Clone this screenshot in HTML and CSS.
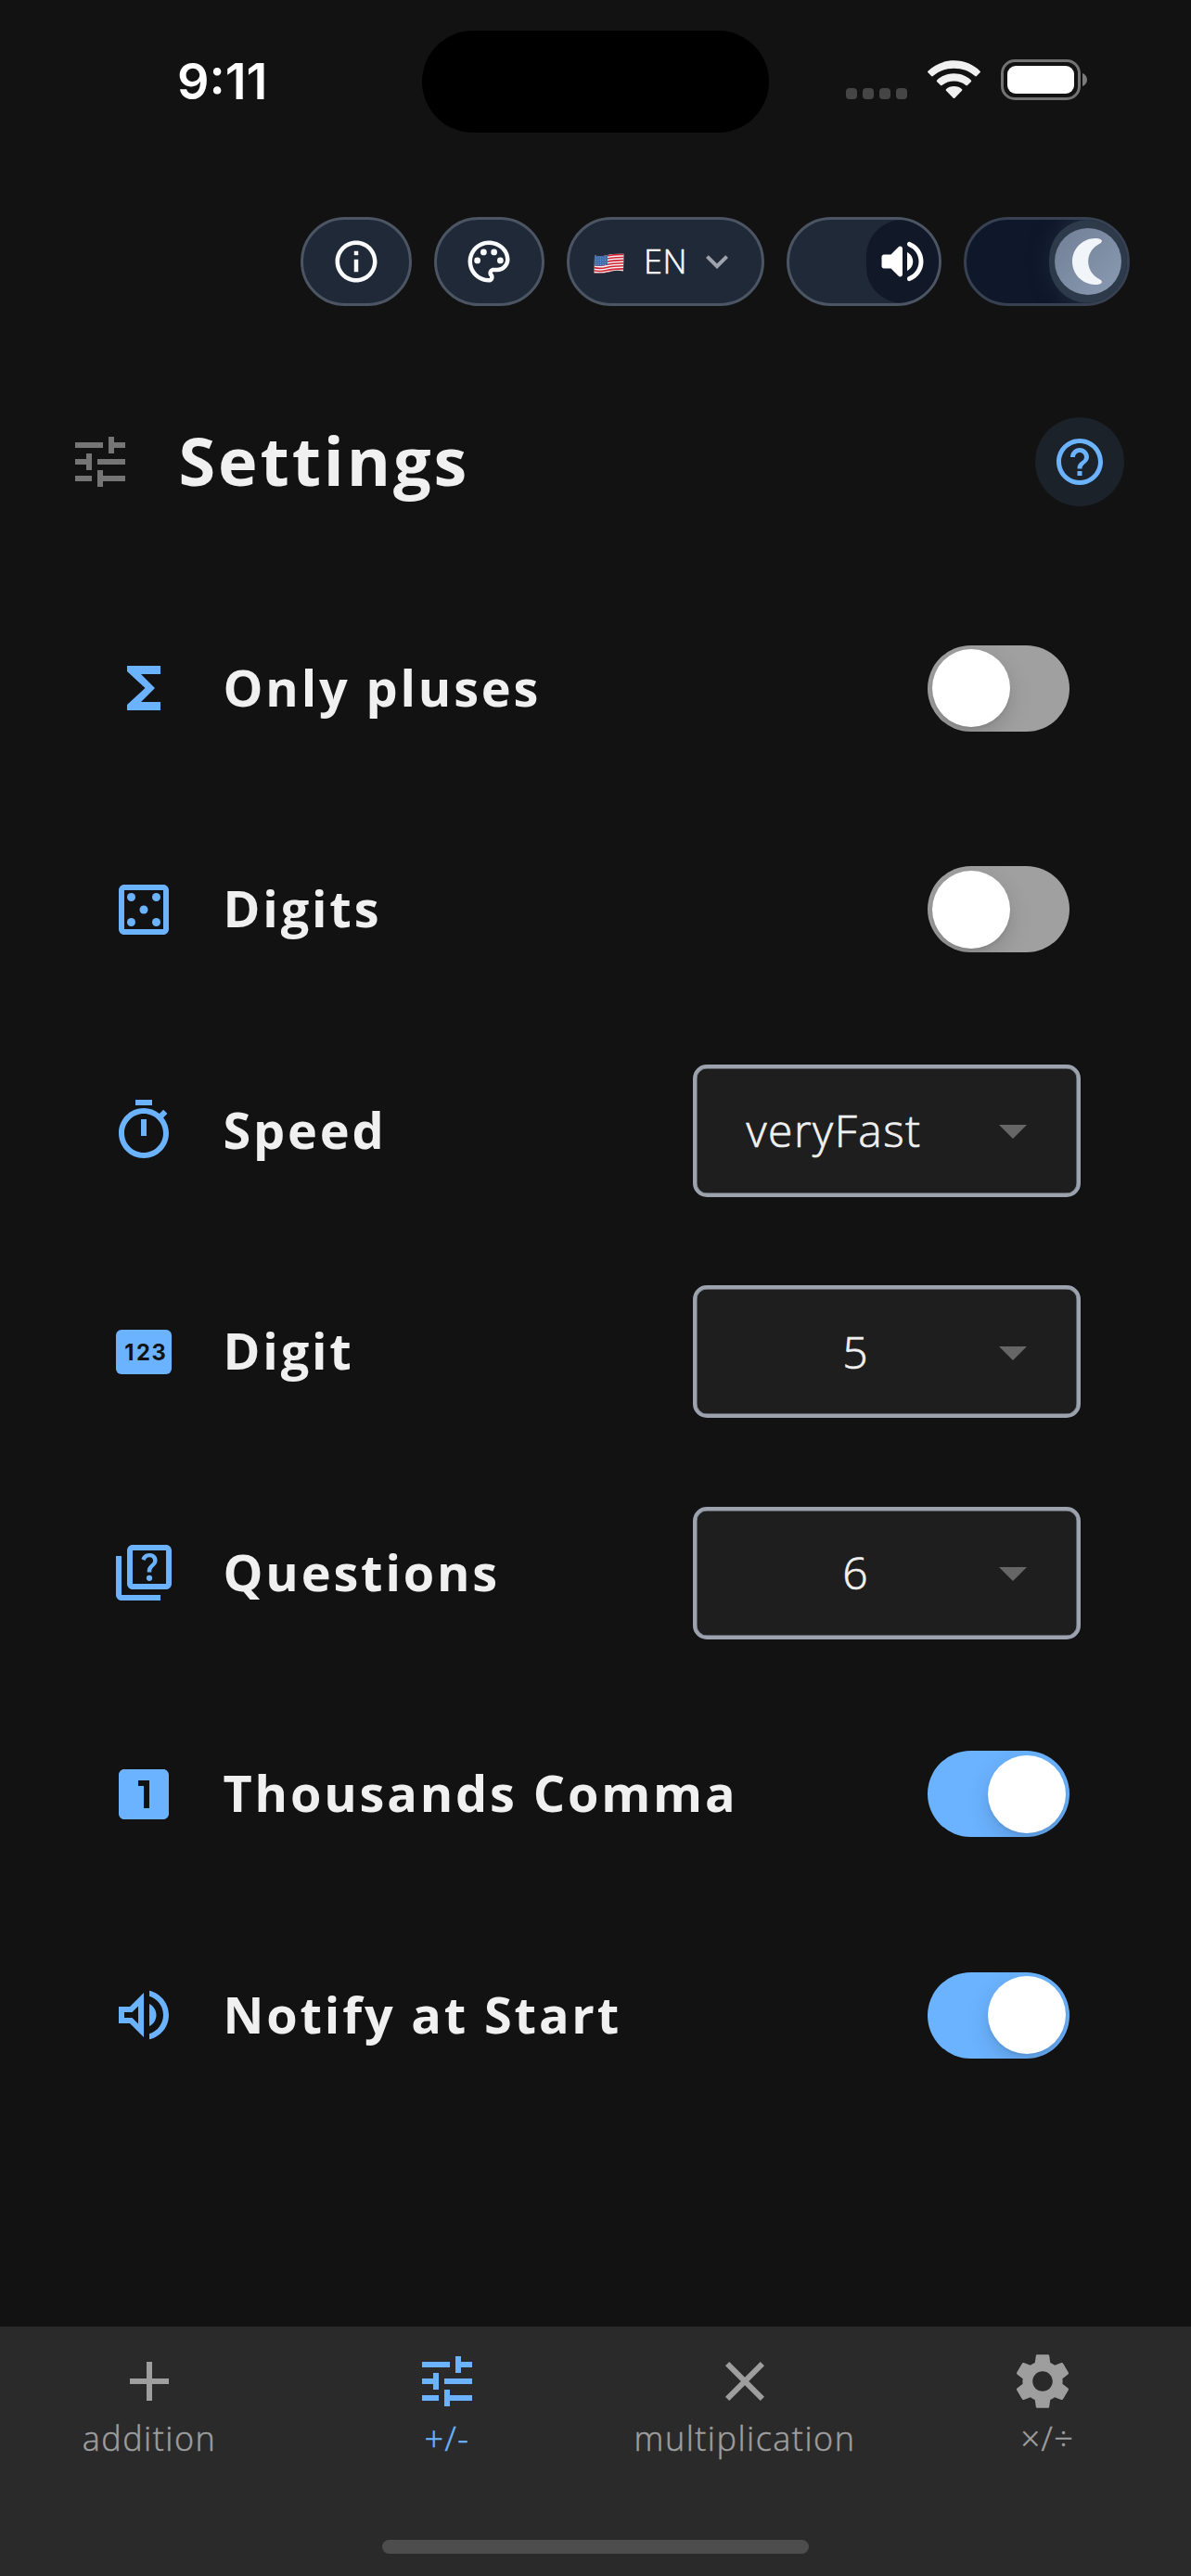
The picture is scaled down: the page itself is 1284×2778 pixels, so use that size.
FILE: index.html
```html
<!DOCTYPE html>
<html lang="en">
<head>
<meta charset="utf-8">
<title>Settings</title>
<link rel="stylesheet" href="styles.css">
</head>
<body>
<div class="screen">
  <header class="status">
    <span class="time">9:11</span>
    <span class="island"></span>
    <span class="signal"><i></i><i></i><i></i><i></i></span>
    <svg class="wifi" viewBox="0 0 58 42" fill="#fff">
      <path d="M29 0C40.500 0 50.500 4.500 57.600 11.500Q58.300 12.300 57.500 13.200L53.800 17Q53 17.800 52.100 17C46 11.300 38 8.500 29 8.500S12 11.300 5.900 17Q5 17.800 4.200 17L.5 13.200Q-.3 12.300 .4 11.500C7.500 4.500 17.500 0 29 0Z"/>
      <path d="M29 14.200C36.500 14.200 43 17 47.700 21.500Q48.500 22.300 47.600 23.200L43.700 27Q42.900 27.800 42 27C38.500 24 34 22.400 29 22.400S19.500 24 16 27Q15.100 27.800 14.300 27L10.400 23.200Q9.500 22.300 10.300 21.500C15 17 21.500 14.200 29 14.200Z"/>
      <path d="M29 28.200C32.600 28.200 35.500 29.500 37.700 31.400Q38.500 32.200 37.700 33L29.800 41Q29 41.700 28.200 41L20.300 33Q19.500 32.200 20.300 31.400C22.500 29.500 25.400 28.200 29 28.200Z"/>
    </svg>
    <span class="battery"><i></i></span>
    <svg class="battery-cap" viewBox="0 0 5 14"><path d="M0 0C3 1 5 4 5 7S3 13 0 14Z" fill="#7b7b7b"/></svg>
  </header>

  <div class="toolbar">
    <button class="pill pill-icon">
      <svg class="i54" viewBox="0 0 24 24"><path d="M11 7h2v2h-2zm0 4h2v6h-2zm1-9C6.480 2 2 6.480 2 12s4.480 10 10 10 10-4.480 10-10S17.520 2 12 2zm0 18c-4.410 0-8-3.590-8-8s3.590-8 8-8 8 3.590 8 8-3.590 8-8 8z"/></svg>
    </button>
    <button class="pill pill-icon">
      <svg class="i54" viewBox="0 0 24 24"><path d="M12 22C6.490 22 2 17.510 2 12S6.490 2 12 2s10 4.040 10 9c0 3.310-2.690 6-6 6h-1.770c-.28 0-.5.22-.5.5 0 .12.05.23.13.33.41.47.64 1.060.64 1.670 0 1.380-1.120 2.500-2.500 2.500zm0-18c-4.410 0-8 3.590-8 8s3.590 8 8 8c.28 0 .5-.22.5-.5 0-.16-.08-.28-.14-.35-.41-.46-.63-1.050-.63-1.650 0-1.380 1.120-2.500 2.500-2.500H16c2.210 0 4-1.790 4-4 0-3.860-3.590-7-8-7z"/><circle cx="6.500" cy="11.500" r="1.500"/><circle cx="9.500" cy="7.500" r="1.500"/><circle cx="14.500" cy="7.500" r="1.500"/><circle cx="17.500" cy="11.500" r="1.500"/></svg>
    </button>
    <button class="pill lang">
      <svg class="flag" viewBox="0 0 33 23">
        <defs><clipPath id="wave"><path d="M1 2.500Q7 4 14 2.200T32.500 .8L32 19.500Q25 18 18 20T.5 21.500Z"/></clipPath></defs>
        <g clip-path="url(#wave)">
          <rect width="33" height="23" fill="#f4f1f2"/>
          <g fill="none" stroke="#d22434" stroke-width="1.600">
            <path d="M0 3.200Q7 4.800 14 3T33 1.400"/><path d="M0 6.300Q7 7.900 14 6.100T33 4.500"/><path d="M0 9.400Q7 11 14 9.200T33 7.600"/><path d="M0 12.500Q7 14.100 14 12.300T33 10.700"/><path d="M0 15.600Q7 17.200 14 15.400T33 13.800"/><path d="M0 18.700Q7 20.300 14 18.500T33 16.900"/><path d="M0 21.500Q7 23 14 21.300T33 19.500"/>
          </g>
          <path d="M0 0H15V12.500Q7 14.500 0 13.500Z" fill="#3c6ba8"/>
          <path d="M2 5H15M2 7.500H15M2 10H15M2 12.300H14" stroke="#8fb0d6" stroke-width=".8" stroke-dasharray="1 1.500"/>
        </g>
      </svg>
      <span>EN</span>
      <svg class="chev" viewBox="0 0 24 24"><path d="M16.590 8.590L12 13.170 7.410 8.590 6 10l6 6 6-6z"/></svg>
    </button>
    <div class="pill sound">
      <span class="sound-knob">
        <svg class="i60" viewBox="0 0 24 24"><path d="M3 10v4c0 .55.45 1 1 1h3l3.290 3.290c.63.63 1.710.18 1.710-.71V6.410c0-.89-1.080-1.340-1.710-.71L7 9H4c-.55 0-1 .45-1 1zm13.500 2c0-1.770-1.020-3.290-2.500-4.030v8.050c1.480-.73 2.500-2.250 2.500-4.020zM14 4.450v.2c0 .38.25.71.6.85C17.180 6.530 19 9.060 19 12s-1.820 5.470-4.400 6.500c-.36.14-.6.47-.6.85v.2c0 .63.63 1.070 1.210.85C18.600 19.110 21 15.840 21 12s-2.400-7.110-5.790-8.400c-.58-.23-1.210.22-1.210.85z"/></svg>
      </span>
    </div>
    <div class="pill theme">
      <span class="theme-ring"><span class="theme-knob">
        <svg class="moon" viewBox="0 0 32 50"><path d="M25 0C27 0 28.500 .2 29.800 .7C32.500 1.700 32.500 4.300 30 5.500C22 9.500 17.200 16.500 17.200 25S22 40.500 30 44.500C32.500 45.700 32.500 48.300 29.800 49.300C28.500 49.800 27 50 25 50C11.200 50 0 38.800 0 25S11.200 0 25 0Z" fill="#f1f5f9"/></svg>
      </span></span>
    </div>
  </div>

  <div class="heading">
    <svg class="i72 muted" viewBox="0 0 24 24"><path d="M3 17v2h6v-2H3zM3 5v2h10V5H3zm10 16v-2h8v-2h-8v-2h-2v6h2zM7 9v2H3v2h4v2h2V9H7zm14 4v-2H11v2h10zm-6-4h2V7h4V5h-4V3h-2v6z"/></svg>
    <h1>Settings</h1>
    <button class="help">
      <svg class="i60" viewBox="0 0 24 24"><path d="M11 18h2v-2h-2v2zm1-16C6.480 2 2 6.480 2 12s4.480 10 10 10 10-4.480 10-10S17.520 2 12 2zm0 18c-4.410 0-8-3.590-8-8s3.590-8 8-8 8 3.590 8 8-3.590 8-8 8zm0-14c-2.210 0-4 1.790-4 4h2c0-1.100.9-2 2-2s2 .9 2 2c0 2-3 1.750-3 5h2c0-2.250 3-2.500 3-5 0-2.210-1.790-4-4-4z"/></svg>
    </button>
  </div>

  <main class="list">
    <div class="row">
      <svg class="i72" viewBox="0 0 24 24"><path d="M18 4H6v2l6.500 6L6 18v2h12v-3h-7l5-5-5-5h7z"/></svg>
      <span class="label">Only pluses</span>
      <span class="switch"><i></i></span>
    </div>
    <div class="row">
      <svg class="i72" viewBox="0 0 24 24"><path d="M19 3H5c-1.100 0-2 .9-2 2v14c0 1.100.9 2 2 2h14c1.100 0 2-.9 2-2V5c0-1.100-.9-2-2-2zm0 16H5V5h14v14z"/><circle cx="7.500" cy="7.500" r="1.500"/><circle cx="16.500" cy="7.500" r="1.500"/><circle cx="12" cy="12" r="1.500"/><circle cx="7.500" cy="16.500" r="1.500"/><circle cx="16.500" cy="16.500" r="1.500"/></svg>
      <span class="label">Digits</span>
      <span class="switch"><i></i></span>
    </div>
    <div class="row">
      <svg class="i72" viewBox="0 0 24 24"><path d="M15 1H9v2h6V1zm-4 13h2V8h-2v6zm8.030-6.610l1.420-1.420c-.43-.51-.9-.99-1.410-1.410l-1.420 1.420C16.070 4.740 14.120 4 12 4c-4.970 0-9 4.030-9 9s4.020 9 9 9 9-4.030 9-9c0-2.120-.74-4.070-1.970-5.610zM12 20c-3.870 0-7-3.130-7-7s3.130-7 7-7 7 3.130 7 7-3.130 7-7 7z"/></svg>
      <span class="label">Speed</span>
      <div class="select wide"><span>veryFast</span><svg class="i72" viewBox="0 0 24 24"><path d="M7 10l5 5 5-5z"/></svg></div>
    </div>
    <div class="row">
      <svg class="i72" viewBox="0 0 24 24"><rect x="2" y="4" width="20" height="16" rx="2"/><text class="pin" x="5.100 9.300 14.800" y="14.850">123</text></svg>
      <span class="label">Digit</span>
      <div class="select"><span>5</span><svg class="i72" viewBox="0 0 24 24"><path d="M7 10l5 5 5-5z"/></svg></div>
    </div>
    <div class="row">
      <svg class="i72" viewBox="0 0 24 24"><path d="M4 6H2v14c0 1.100.9 2 2 2h14v-2H4V6z"/><path d="M20 2H8c-1.100 0-2 .9-2 2v12c0 1.100.9 2 2 2h12c1.100 0 2-.9 2-2V4c0-1.100-.9-2-2-2zm0 14H8V4h12v12z"/><path d="M13.510 10.160c.41-.73 1.180-1.160 1.630-1.800.48-.68.21-1.940-1.140-1.940-.88 0-1.320.67-1.500 1.230l-1.370-.57C11.510 5.960 12.520 5 13.990 5c1.230 0 2.080.56 2.510 1.260.37.6.58 1.730.01 2.570-.63.93-1.230 1.210-1.560 1.810-.13.24-.18.4-.18 1.180h-1.520c.01-.41-.06-1.080.26-1.660z"/><circle cx="14" cy="13.950" r="1.050"/></svg>
      <span class="label">Questions</span>
      <div class="select"><span>6</span><svg class="i72" viewBox="0 0 24 24"><path d="M7 10l5 5 5-5z"/></svg></div>
    </div>
    <div class="row">
      <svg class="i72" viewBox="0 0 24 24"><path d="M19 3H5c-1.100 0-2 .9-2 2v14c0 1.100.9 2 2 2h14c1.100 0 2-.9 2-2V5c0-1.100-.9-2-2-2zm-5 14h-2V9h-2V7h4v10z"/></svg>
      <span class="label">Thousands Comma</span>
      <span class="switch on"><i></i></span>
    </div>
    <div class="row">
      <svg class="i72" viewBox="0 0 24 24"><path d="M3 9v6h4l5 5V4L7 9H3zm7-.17v6.340L7.830 13H5v-2h2.830L10 8.830zM16.500 12c0-1.770-1.020-3.290-2.500-4.030v8.050c1.480-.73 2.500-2.250 2.500-4.020zM14 3.230v2.060c2.890.86 5 3.540 5 6.710s-2.110 5.850-5 6.710v2.060c4.010-.91 7-4.490 7-8.770s-2.990-7.860-7-8.770z"/></svg>
      <span class="label">Notify at Start</span>
      <span class="switch on"><i></i></span>
    </div>
  </main>

  <nav class="tabs">
    <div class="tab-row">
      <a class="tab"><svg class="i72" viewBox="0 0 24 24"><path d="M19 13h-6v6h-2v-6H5v-2h6V5h2v6h6v2z"/></svg><span>addition</span></a>
      <a class="tab active"><svg class="i72" viewBox="0 0 24 24"><path d="M3 17v2h6v-2H3zM3 5v2h10V5H3zm10 16v-2h8v-2h-8v-2h-2v6h2zM7 9v2H3v2h4v2h2V9H7zm14 4v-2H11v2h10zm-6-4h2V7h4V5h-4V3h-2v6z"/></svg><span>+/-</span></a>
      <a class="tab"><svg class="i72" viewBox="0 0 24 24"><path d="M19 6.410L17.590 5 12 10.590 6.410 5 5 6.410 10.590 12 5 17.590 6.410 19 12 13.410 17.590 19 19 17.590 13.410 12z"/></svg><span>multiplication</span></a>
      <a class="tab"><svg class="i72" viewBox="0 0 24 24"><path d="M19.140 12.940c.04-.3.06-.61.06-.94 0-.32-.02-.64-.07-.94l2.030-1.580c.18-.14.23-.41.12-.61l-1.920-3.320c-.12-.22-.37-.29-.59-.22l-2.390.96c-.5-.38-1.030-.7-1.620-.94L14.400 2.810c-.04-.24-.24-.41-.48-.41h-3.840c-.24 0-.43.17-.47.41L9.250 5.350C8.660 5.590 8.120 5.920 7.630 6.290L5.240 5.330c-.22-.08-.47 0-.59.22L2.740 8.870c-.12.21-.08.47.12.61l2.030 1.580C4.840 11.360 4.800 11.690 4.800 12s.02.64.07.94l-2.030 1.580c-.18.14-.23.41-.12.61l1.920 3.320c.12.22.37.29.59.22l2.390-.96c.5.38 1.030.7 1.620.94l.36 2.540c.05.24.24.41.48.41h3.840c.24 0 .44-.17.47-.41l.36-2.540c.59-.24 1.130-.56 1.620-.94l2.390.96c.22.08.47 0 .59-.22l1.920-3.320c.12-.22.07-.47-.12-.61L19.140 12.940zM12 15.600c-1.980 0-3.600-1.620-3.600-3.600s1.620-3.600 3.600-3.600 3.600 1.620 3.600 3.600S13.980 15.600 12 15.600z"/></svg><span>&nbsp;×/÷</span></a>
    </div>
    <div class="home"></div>
  </nav>
</div>
</body>
</html>
```
FILE: styles.css
```css
* { box-sizing: border-box; }

body {
  margin: 0;
  background: #121212;
  color: #f0f0f0;
  font-family: "Open Sans", "Noto Sans", sans-serif;
}

button {
  margin: 0;
  padding: 0;
  border: 0;
  color: inherit;
  font: inherit;
}

svg { display: block; flex: none; fill: currentColor; }

.i54 { width: 54px; height: 54px; }
.i60 { width: 60px; height: 60px; }
.i72 { width: 72px; height: 72px; }

.screen {
  display: flex;
  flex-direction: column;
  width: 1284px;
  height: 2778px;
  overflow: hidden;
}

/* Status bar */
.status {
  display: flex;
  align-items: center;
  height: 172px;
  padding-left: 191px;
}
.time {
  width: 264px;
  margin-top: 3px;
  color: #fff;
  font: 600 54px/64px Inter, sans-serif;
}
.island {
  width: 374px;
  height: 110px;
  margin-top: 4px;
  border-radius: 55px;
  background: #000;
}
.signal {
  display: flex;
  gap: 6px;
  margin: 29px 22px 0 83px;
}
.signal i {
  width: 12px;
  height: 12px;
  border-radius: 4px;
  background: #454545;
}
.wifi { width: 57px; height: 42px; }
.battery {
  width: 86px;
  height: 44px;
  margin-left: 22px;
  padding: 4px;
  border: 3px solid #737373;
  border-radius: 15px;
}
.battery i {
  display: block;
  height: 30px;
  border-radius: 9px;
  background: #fff;
}
.battery-cap { width: 5px; height: 14px; margin-left: 2px; }

/* Quick controls */
.toolbar {
  display: flex;
  justify-content: flex-end;
  gap: 24px;
  margin-top: 62px;
  padding-right: 66px;
}
.pill {
  display: flex;
  align-items: center;
  height: 96px;
  border: 3px solid #4b5563;
  border-radius: 48px;
  background: #1f2937;
  color: #f9fafb;
  overflow: hidden;
}
.pill-icon { width: 119.500px; justify-content: center; }
.lang { width: 213px; padding-left: 26px; }
.flag { width: 33px; height: 23px; margin-top: 4px; }
.lang span {
  width: 76px;
  padding-left: 21px;
  font-size: 36px;
  font-weight: 300;
  line-height: 48px;
  letter-spacing: .5px;
  text-align: left;
  -webkit-text-stroke: .6px currentColor;
}
.chev { width: 48px; height: 48px; color: #9ca3af; }
.sound { width: 167px; justify-content: flex-end; background: #1f2937; }
.sound-knob {
  display: flex;
  align-items: center;
  justify-content: center;
  width: 78px;
  height: 90px;
  border-radius: 39px;
  background: #111827;
  color: #fff;
}
.theme {
  width: 179px;
  justify-content: flex-end;
  border-color: #374151;
  background: linear-gradient(90deg, #0f172a 55%, #1e293b 85%);
}
.theme-ring {
  display: flex;
  align-items: center;
  width: 84px;
  height: 90px;
  padding-left: 6px;
  border-radius: 45px;
  background: #2c3a4a;
  box-shadow: 0 0 24px rgba(51, 65, 85, .35);
}
.theme-knob {
  display: flex;
  align-items: center;
  width: 72px;
  height: 72px;
  padding-left: 19px;
  border-radius: 50%;
  background: linear-gradient(135deg, #718096, #8a9ab2);
}
.moon { width: 32px; height: 50px; }

/* Page heading */
.heading {
  display: flex;
  align-items: center;
  height: 96px;
  margin-top: 120px;
  padding: 0 72px;
}
.muted { color: #757575; }
h1 {
  flex: 1;
  margin: 0 0 3px 48.500px;
  font-size: 72px;
  font-weight: 700;
  line-height: 93px;
  letter-spacing: 2.900px;
}
.help {
  display: flex;
  align-items: center;
  justify-content: center;
  width: 96px;
  height: 96px;
  border-radius: 50%;
  background: #1b2229;
  color: #6bb3ff;
}

/* Setting rows */
.list { margin-top: 76.750px; }
.row {
  display: flex;
  align-items: center;
  height: 238.500px;
  padding: 0 119px;
  color: #6bb3ff;
}
.label {
  flex: 1;
  margin: 0 0 3px 49.500px;
  color: #f0f0f0;
  font-size: 54px;
  font-weight: 700;
  line-height: 72px;
  letter-spacing: 2.850px;
}
.pin {
  fill: #121212;
  font: 700 7.900px Inter, sans-serif;
}
.switch {
  display: flex;
  width: 153px;
  height: 93px;
  margin-right: 12px;
  padding: 4.500px;
  border-radius: 47px;
  background: #a0a0a0;
  overflow: hidden;
}
.switch i {
  width: 84px;
  height: 84px;
  border-radius: 50%;
  background: #fff;
  box-shadow: 0 9px 24px rgba(0, 0, 0, .15), 0 3px 3px rgba(0, 0, 0, .06);
}
.switch.on { justify-content: flex-end; background: #6bb3ff; }
.select {
  display: flex;
  align-items: center;
  width: 418.500px;
  height: 143px;
  padding: 0 33px 0 39px;
  border: 4px solid #9ca3af;
  border-radius: 15px;
  background: #1e1e1e;
  box-shadow: inset 0 0 0 .5px #9ca3af;
  color: #666;
}
.select span {
  flex: 1;
  color: #f0f0f0;
  font-size: 48px;
  font-weight: 300;
  line-height: 72px;
  letter-spacing: 1.500px;
  text-align: center;
  -webkit-text-stroke: .7px currentColor;
}
.select.wide span { padding-left: 15px; text-align: left; }

/* Bottom navigation */
.tabs {
  display: flex;
  flex-direction: column;
  justify-content: space-between;
  align-items: center;
  height: 269px;
  margin-top: auto;
  padding: 23px 0 24px;
  background: #2a2a2a;
}
.tab-row { display: flex; width: 100%; }
.tab {
  display: flex;
  flex: 1;
  flex-direction: column;
  align-items: center;
  color: #9e9e9e;
  font-size: 36px;
  font-weight: 300;
  line-height: 51px;
  letter-spacing: 1.500px;
}
.tab span {
  padding-left: 1px;
  -webkit-text-stroke: .5px currentColor;
}
.tab.active { color: #6bb3ff; }
.home {
  width: 460px;
  height: 15px;
  border-radius: 8px;
  background: #4d4d4d;
}
```
